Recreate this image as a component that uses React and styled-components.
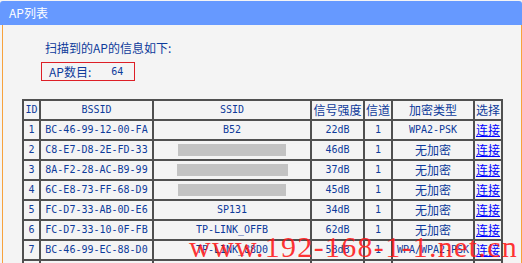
import React from 'react';
import styled, { createGlobalStyle } from 'styled-components';

const GlobalStyle = createGlobalStyle`
    html, body {
        margin: 0;
        padding: 0;
        background: #f4f4f4;
        overflow: hidden;
    }
`;

const Page = styled.div`
    position: relative;
    width: 522px;
    height: 263px;
    overflow: hidden;
    background: #f4f4f4;
    font-family: "Noto Sans CJK SC", "Liberation Sans", sans-serif;
`;

const TitleBar = styled.div`
    margin-top: 1px;
    height: 24px;
    line-height: 24px;
    padding-left: 9px;
    background: #6699ff;
    border-radius: 3px 3px 0 0;
    color: #ffffff;
    font-size: 12px;
`;

const Panel = styled.div`
    margin-left: 2px;
    width: 518px;
    height: 240px;
    border-left: 1px solid #f7a23c;
    border-right: 1px solid #f7a23c;
    color: #0e3b9b;
`;

const Intro = styled.div`
    padding: 15px 0 0 42px;
    height: 16px;
    line-height: 16px;
    font-size: 12px;
`;

const CountBox = styled.div`
    margin: 6px 0 0 38px;
    width: 85px;
    height: 17px;
    padding-left: 7px;
    border: 1px solid #dd1f26;
    display: flex;
    align-items: center;
    font-size: 12px;
`;

const CountValue = styled.span`
    margin-left: 20px;
    font-family: "DejaVu Sans Mono", monospace;
    font-size: 10px;
`;

const Table = styled.table`
    margin: 18px 0 0 19px;
    border-spacing: 0;
    border-top: 2px solid #505050;
    border-left: 2px solid #505050;
    table-layout: fixed;
    width: 479px;
`;

const Cell = styled.td`
    height: 18px;
    padding: 0;
    border-right: 2px solid #505050;
    border-bottom: 2px solid #505050;
    text-align: center;
    white-space: nowrap;
    overflow: hidden;
    font-family: ${(p) => (p.$mono ? '"DejaVu Sans Mono", monospace' : '"Noto Sans CJK SC", sans-serif')};
    font-size: ${(p) => (p.$mono ? '10px' : '12px')};
    line-height: 18px;
    color: #0e3b9b;
`;

const HeadCell = styled(Cell).attrs({ as: 'th' })`
    font-weight: normal;
`;

const Hidden = styled.span`
    display: inline-block;
    vertical-align: middle;
    width: ${(p) => p.$w}px;
    height: 12px;
    background: #c3c3c3;
`;

const Connect = styled.a`
    color: #0000ff;
    text-decoration: underline;
    font-size: 12px;
`;

const Watermark = styled.div`
    position: absolute;
    left: 189px;
    top: 232px;
    line-height: 30px;
    font-family: "Liberation Serif", serif;
    font-size: 30px;
    letter-spacing: 1.3px;
    color: rgba(255, 24, 24, 0.88);
    white-space: nowrap;
    pointer-events: none;
`;

const columns = [
    { label: 'ID', width: 15, mono: true },
    { label: 'BSSID', width: 111, mono: true },
    { label: 'SSID', width: 156, mono: true },
    { label: '信号强度', width: 51 },
    { label: '信道', width: 26 },
    { label: '加密类型', width: 80 },
    { label: '选择', width: 26 },
];

const rows = [
    ['1', 'BC-46-99-12-00-FA', 'B52', '22dB', 'WPA2-PSK'],
    ['2', 'C8-E7-D8-2E-FD-33', 108, '46dB', '无加密'],
    ['3', '8A-F2-28-AC-B9-99', 111, '37dB', '无加密'],
    ['4', '6C-E8-73-FF-68-D9', 108, '45dB', '无加密'],
    ['5', 'FC-D7-33-AB-0D-E6', 'SP131', '34dB', '无加密'],
    ['6', 'FC-D7-33-10-0F-FB', 'TP-LINK_OFFB', '62dB', '无加密'],
    ['7', 'BC-46-99-EC-88-D0', 'TP-LINK_88D0', '58dB', 'WPA/WPA2-PSK'],
    ['8', '5C-63-BF-2A-71-0C', 'ChinaNet', '30dB', 'WPA2-PSK'],
];

export default function App() {
    return (
        <Page>
            <GlobalStyle />
            <TitleBar>AP列表</TitleBar>
            <Panel>
                <Intro>扫描到的AP的信息如下:</Intro>
                <CountBox>
                    AP数目:<CountValue>64</CountValue>
                </CountBox>
                <Table>
                    <colgroup>
                        {columns.map((c) => (
                            <col key={c.label} style={{ width: c.width + 2 }} />
                        ))}
                    </colgroup>
                    <thead>
                        <tr>
                            {columns.map((c) => (
                                <HeadCell key={c.label} $mono={c.mono}>{c.label}</HeadCell>
                            ))}
                        </tr>
                    </thead>
                    <tbody>
                        {rows.map(([id, bssid, ssid, signal, enc]) => (
                            <tr key={id}>
                                <Cell $mono>{id}</Cell>
                                <Cell $mono>{bssid}</Cell>
                                <Cell $mono>
                                    {typeof ssid === 'number' ? <Hidden $w={ssid} /> : ssid}
                                </Cell>
                                <Cell $mono>{signal}</Cell>
                                <Cell $mono>1</Cell>
                                <Cell $mono={enc !== '无加密'}>{enc}</Cell>
                                <Cell>
                                    <Connect href="#">连接</Connect>
                                </Cell>
                            </tr>
                        ))}
                    </tbody>
                </Table>
            </Panel>
            <Watermark>www.192-168-1-1.net.cn</Watermark>
        </Page>
    );
}
